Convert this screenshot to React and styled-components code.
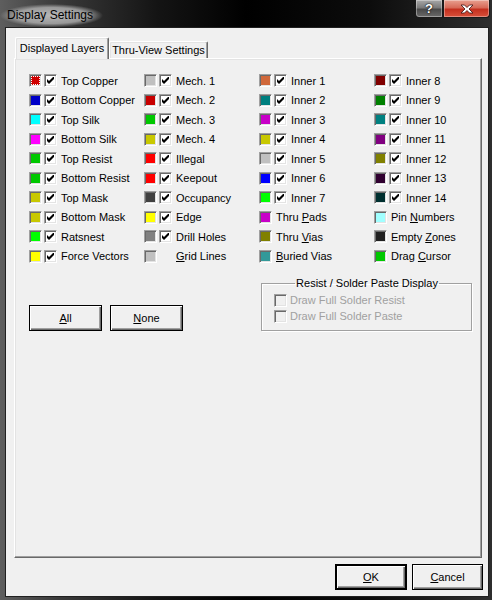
import React from 'react';
import styled, { createGlobalStyle } from 'styled-components';

const Global = createGlobalStyle`
  html, body {
    margin: 0;
    background: #000;
  }
  body {
    font-family: "Liberation Sans", Arial, sans-serif;
    font-size: 11px;
    color: #000;
  }
`;

const Window = styled.div`
  width: 492px;
  height: 600px;
  box-sizing: border-box;
  display: flex;
  flex-direction: column;
  padding: 0 3px 3px 5px;
  background: linear-gradient(90deg, #5e5e5e 0%, #3a3a3a 12%, #141414 32%, #000 50%, #0c0c0c 75%, #2e2e2e 100%);
`;

const TitleBar = styled.div`
  height: 27px;
  display: flex;
  align-items: flex-start;
  justify-content: space-between;
  margin-left: -5px;
  margin-right: -3px;
`;

const Title = styled.div`
  font-family: "Liberation Sans", Arial, sans-serif;
  font-size: 12px;
  line-height: 14px;
  margin: 4px 0 0 0;
  padding: 4px 10px 5px 7px;
  color: #000;
  background: radial-gradient(closest-side, rgba(190, 190, 190, 0.95) 0%, rgba(170, 170, 170, 0.85) 70%, rgba(140, 140, 140, 0) 100%);
`;

const Caption = styled.div`
  display: flex;
  margin-right: 2px;
`;

const CaptionButton = styled.div`
  width: ${(p) => p.$w}px;
  height: 18px;
  box-sizing: border-box;
  display: flex;
  align-items: center;
  justify-content: center;
  border: 1px solid #1a1a1a;
  border-top: none;
  border-radius: ${(p) => p.$radius};
  background: ${(p) =>
    p.$close
      ? 'linear-gradient(180deg, #e8a090 0%, #d76a58 45%, #c4301f 55%, #d8503a 100%)'
      : 'linear-gradient(180deg, #a8a8a8 0%, #7a7a7a 45%, #4a4a4a 55%, #6a6a6a 100%)'};
  box-shadow: inset 0 0 0 1px rgba(255, 255, 255, 0.35);
  color: #fff;
  font-weight: bold;
  font-size: 13px;
  text-shadow: 0 0 2px #000, 0 0 1px #000;
`;

const Client = styled.div`
  flex: 1;
  display: flex;
  flex-direction: column;
  background: #f0f0f0;
  border: 1px solid #202020;
  padding: 9px 6px 6px 8px;
`;

const TabStrip = styled.div`
  height: 21px;
  display: flex;
  align-items: flex-end;
  position: relative;
  z-index: 1;
`;

const Tab = styled.div`
  box-sizing: border-box;
  width: ${(p) => p.$w}px;
  height: ${(p) => (p.$active ? 22 : 17)}px;
  margin-left: ${(p) => (p.$active ? 1 : 0)}px;
  margin-bottom: ${(p) => (p.$active ? -1 : 0)}px;
  padding-top: ${(p) => (p.$active ? 4 : 2)}px;
  text-align: center;
  background: #f0f0f0;
  border-top: 1px solid #fff;
  border-left: 1px solid #fff;
  border-right: 1px solid #696969;
  box-shadow: inset -1px 0 0 #a0a0a0, inset 1px 1px 0 #e3e3e3;
  border-radius: 2px 2px 0 0;
`;

const Panel = styled.div`
  height: 500px;
  box-sizing: border-box;
  border-top: 1px solid #fff;
  border-left: 1px solid #fff;
  border-right: 1px solid #696969;
  border-bottom: 1px solid #696969;
  box-shadow: inset -1px -1px 0 #a0a0a0, inset 1px 1px 0 #e3e3e3;
  padding: 12px 0 0 14px;
`;

const LayerGrid = styled.div`
  display: grid;
  grid-template-columns: repeat(4, 115px);
  grid-auto-flow: column;
  grid-template-rows: repeat(10, 19.5px);
`;

const Item = styled.div`
  display: flex;
  align-items: center;
  white-space: nowrap;
`;

const Swatch = styled.span`
  width: 13px;
  height: 13px;
  box-sizing: border-box;
  flex: none;
  border: 1px solid;
  border-color: #a0a0a0 #fff #fff #a0a0a0;
  box-shadow: inset 1px 1px 0 #696969, inset -1px -1px 0 #e3e3e3;
  padding: 1px;
  display: flex;
`;

const Fill = styled.span`
  flex: 1;
  box-sizing: border-box;
  background: ${(p) => p.$color};
  border: ${(p) => (p.$focus ? '1px dotted #fff' : 'none')};
`;

const Box = styled.span`
  width: 13px;
  height: 13px;
  box-sizing: border-box;
  flex: none;
  margin-left: ${(p) => p.$ml ?? 2}px;
  border: 1px solid;
  border-color: #a0a0a0 #fff #fff #a0a0a0;
  box-shadow: inset 1px 1px 0 #696969, inset -1px -1px 0 #e3e3e3;
  background: ${(p) => (p.$disabled ? '#f0f0f0' : '#fff')};
  visibility: ${(p) => (p.$hidden ? 'hidden' : 'visible')};
  display: flex;
  align-items: center;
  justify-content: center;
`;

const Label = styled.span`
  margin-left: ${(p) => p.$ml}px;
  color: ${(p) => (p.$disabled ? '#a0a0a0' : '#000')};
`;

const Lower = styled.div`
  display: grid;
  grid-template-columns: 232px 211px;
  margin-top: 11px;
`;

const ButtonRow = styled.div`
  display: flex;
  gap: 8px;
  margin-top: 28px;
  align-items: flex-start;
`;

const Button = styled.div`
  box-sizing: border-box;
  width: ${(p) => p.$w}px;
  height: ${(p) => p.$h}px;
  display: flex;
  align-items: center;
  justify-content: center;
  background: #f0f0f0;
  border: ${(p) => (p.$default ? 2 : 1)}px solid #000;
  box-shadow: inset 1px 1px 0 #fff, inset -1px -1px 0 #696969, inset -2px -2px 0 #a0a0a0;
  font-size: 11px;
`;

const Group = styled.fieldset`
  margin: 0;
  padding: 2px 10px 4px 11px;
  border: 1px solid #a0a0a0;
  box-shadow: 1px 1px 0 #fff, inset 1px 1px 0 #fff;
  min-width: 0;
`;

const Legend = styled.legend`
  margin: 0 auto;
  padding: 0 1px;
  font-size: 11px;
  line-height: 13px;
`;

const GroupRow = styled.div`
  height: 16px;
  display: flex;
  align-items: center;
`;

const Footer = styled.div`
  display: flex;
  justify-content: flex-end;
  gap: 5px;
  margin-top: 6px;
  margin-right: -1px;
`;

const Check = () => (
  <svg width="7" height="7" viewBox="0 0 7 7">
    <path d="M0 2 L2 4 L6 0 L7 0 L7 2 L2 7 L0 5 Z" fill="#000" />
  </svg>
);

const Accel = ({ text, u }) =>
  u === undefined ? (
    text
  ) : (
    <>
      {text.slice(0, u)}
      <u>{text[u]}</u>
      {text.slice(u + 1)}
    </>
  );

// check: true = ticked box, 'blank' = empty slot kept, false = no slot
const layers = [
  ['Top Copper', '#d00000', true, undefined, true],
  ['Bottom Copper', '#0000c8', true],
  ['Top Silk', '#00ffff', true],
  ['Bottom Silk', '#ff00ff', true],
  ['Top Resist', '#00c800', true],
  ['Bottom Resist', '#00c800', true],
  ['Top Mask', '#c8c800', true],
  ['Bottom Mask', '#c8c800', true],
  ['Ratsnest', '#00ff00', true],
  ['Force Vectors', '#ffff00', true],
  ['Mech. 1', '#c0c0c0', true],
  ['Mech. 2', '#c80000', true],
  ['Mech. 3', '#00c800', true],
  ['Mech. 4', '#c8c800', true],
  ['Illegal', '#ff0000', true],
  ['Keepout', '#ff0000', true],
  ['Occupancy', '#404040', true],
  ['Edge', '#ffff00', true],
  ['Drill Holes', '#808080', true],
  ['Grid Lines', '#c0c0c0', 'blank', 0],
  ['Inner 1', '#d0683a', true],
  ['Inner 2', '#008080', true],
  ['Inner 3', '#c800c8', true],
  ['Inner 4', '#c8c800', true],
  ['Inner 5', '#c0c0c0', true],
  ['Inner 6', '#0000ff', true],
  ['Inner 7', '#00ff00', true],
  ['Thru Pads', '#c800c8', false, 5],
  ['Thru Vias', '#808000', false, 5],
  ['Buried Vias', '#339999', false, 0],
  ['Inner 8', '#800000', true],
  ['Inner 9', '#008000', true],
  ['Inner 10', '#008080', true],
  ['Inner 11', '#800080', true],
  ['Inner 12', '#808000', true],
  ['Inner 13', '#300030', true],
  ['Inner 14', '#003030', true],
  ['Pin Numbers', '#a0ffff', false, 4],
  ['Empty Zones', '#202020', false, 6],
  ['Drag Cursor', '#00c800', false, 5],
];

const Layer = ({ name, color, check, u, focus }) => (
  <Item>
    <Swatch>
      <Fill $color={color} $focus={focus} />
    </Swatch>
    {check !== false && <Box $hidden={check === 'blank'}>{check === true && <Check />}</Box>}
    <Label $ml={4}>
      <Accel text={name} u={u} />
    </Label>
  </Item>
);

export default function App() {
  return (
    <>
      <Global />
      <Window>
        <TitleBar>
          <Title>Display Settings</Title>
          <Caption>
            <CaptionButton $w={28} $radius="0 0 0 4px">?</CaptionButton>
            <CaptionButton $w={47} $close $radius="0 0 4px 0">
              <svg width="14" height="10" viewBox="0 0 14 10">
                <path
                  d="M1 1 L4.5 1 L7 3.5 L9.5 1 L13 1 L9 5 L13 9 L9.5 9 L7 6.5 L4.5 9 L1 9 L5 5 Z"
                  fill="#fff"
                  stroke="#3a1010"
                  strokeWidth="0.8"
                />
              </svg>
            </CaptionButton>
          </Caption>
        </TitleBar>
        <Client>
          <TabStrip>
            <Tab $active $w={94}>Displayed Layers</Tab>
            <Tab $w={99}>Thru-View Settings</Tab>
          </TabStrip>
          <Panel>
            <LayerGrid>
              {layers.map(([name, color, check, u, focus]) => (
                <Layer key={name} name={name} color={color} check={check} u={u} focus={focus} />
              ))}
            </LayerGrid>
            <Lower>
              <ButtonRow>
                <Button $w={73} $h={26}>
                  <Accel text="All" u={0} />
                </Button>
                <Button $w={73} $h={26}>
                  <Accel text="None" u={0} />
                </Button>
              </ButtonRow>
              <Group>
                <Legend>Resist / Solder Paste Display</Legend>
                <GroupRow>
                  <Box $ml={1} $disabled />
                  <Label $ml={3} $disabled>Draw Full Solder Resist</Label>
                </GroupRow>
                <GroupRow>
                  <Box $ml={1} $disabled />
                  <Label $ml={3} $disabled>Draw Full Solder Paste</Label>
                </GroupRow>
              </Group>
            </Lower>
          </Panel>
          <Footer>
            <Button $w={72} $h={26} $default>
              <Accel text="OK" u={0} />
            </Button>
            <Button $w={71} $h={26}>
              <Accel text="Cancel" u={0} />
            </Button>
          </Footer>
        </Client>
      </Window>
    </>
  );
}
